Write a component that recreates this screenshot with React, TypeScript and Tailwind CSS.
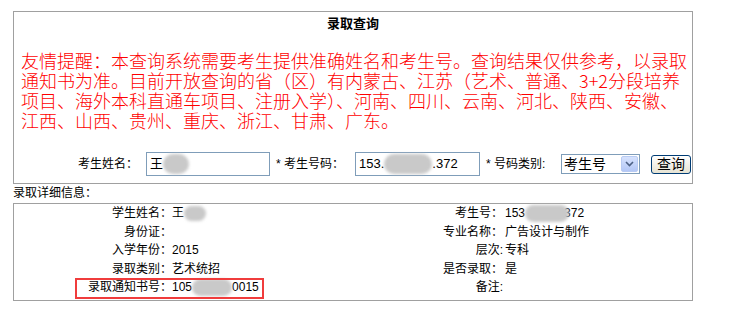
import React from "react";

function Blob({ w, h, className = "" }: { w: string; h: string; className?: string }) {
  return (
    <span
      className={`inline-block align-middle rounded-full bg-[#c9c9c9] blur-[1.5px] ${w} ${h} ${className}`}
    />
  );
}

const rows: [string, React.ReactNode, string, React.ReactNode][] = [
  [
    "学生姓名：",
    <>
      王<Blob w="w-[22px]" h="h-[15px]" />
    </>,
    "考生号：",
    <>
      153<Blob w="w-[44px]" h="h-[17px]" className="relative z-10 -mr-[5px]" />372
    </>,
  ],
  ["身份证：", "", "专业名称：", "广告设计与制作"],
  ["入学年份：", "2015", "层次:", "专科"],
  ["录取类别：", "艺术统招", "是否录取：", "是"],
  [
    "录取通知书号：",
    <>
      105<Blob w="w-[40px]" h="h-[17px]" />0015
    </>,
    "备注:",
    "",
  ],
];

export default function App() {
  return (
    <div className="relative w-[734px] h-[329px] overflow-hidden bg-white text-black font-['Liberation_Sans','Noto_Sans_CJK_SC',sans-serif]">
      {/* query box */}
      <div className="ml-[13px] mt-[11px] w-[680px] h-[173px] border border-[#a0a0a0] flex flex-col">
        <div className="pt-[4px] h-[26px] text-center text-[13px] leading-[16px] font-bold">录取查询</div>
        <div className="mt-[12px] pl-[7px] text-[18px] leading-[20px] font-light font-['Noto_Sans_CJK_SC',sans-serif] text-[#ff0000] whitespace-nowrap">
          <div>友情提醒：本查询系统需要考生提供准确姓名和考生号。查询结果仅供参考，以录取</div>
          <div>通知书为准。目前开放查询的省（区）有内蒙古、江苏（艺术、普通、3+2分段培养</div>
          <div>项目、海外本科直通车项目、注册入学）、河南、四川、云南、河北、陕西、安徽、</div>
          <div>江西、山西、贵州、重庆、浙江、甘肃、广东。</div>
        </div>
        <div className="mt-[22px] h-[24px] flex items-center pl-[64px] text-[12px] whitespace-nowrap">
          <span className="w-[68px]">考生姓名：</span>
          <div className="w-[124px] h-[24px] border border-[#7f9db9] bg-white flex items-center pl-[3px] text-[13px]">
            王<Blob w="w-[26px]" h="h-[20px]" />
          </div>
          <span className="ml-[6px] w-[79px]">* 考生号码：</span>
          <div className="w-[125px] h-[24px] border border-[#7f9db9] bg-white flex items-center pl-[3px] text-[13px]">
            153.<Blob w="w-[48px]" h="h-[20px]" />.372
          </div>
          <span className="ml-[6px] w-[75px]">* 号码类别:</span>
          <div className="w-[79px] h-[20px] border border-[#7f9db9] bg-white flex items-center justify-between pl-[2px] pr-px text-[14px] leading-[18px]">
            <span>考生号</span>
            <span className="w-[17px] h-[16px] rounded-[2px] border border-[#b8cbf3] bg-gradient-to-b from-[#d6e2fd] to-[#b3c7f6] flex items-center justify-center">
              <svg width="9" height="6" viewBox="0 0 9 6">
                <path d="M1 1 L4.5 4.5 L8 1" fill="none" stroke="#4d6185" strokeWidth="1.6" />
              </svg>
            </span>
          </div>
          <button className="ml-[11px] w-[40px] h-[19px] rounded-[3px] border border-[#003c74] bg-gradient-to-b from-white to-[#e6e3d3] text-[14px] leading-[16px] flex items-center justify-center">
            查询
          </button>
        </div>
      </div>

      <div className="ml-[13px] h-[19px] leading-[19px] text-[12px]">录取详细信息：</div>

      {/* detail box */}
      <div className="ml-[13px] w-[680px] h-[98px] border border-[#a0a0a0] grid grid-cols-[158px_175px_158px_1fr] auto-rows-[18.5px] text-[12px] leading-[18.5px] whitespace-nowrap">
        {rows.map(([l1, v1, l2, v2], i) => (
          <React.Fragment key={i}>
            <div className="text-right">{l1}</div>
            <div className="flex items-center">{v1}</div>
            <div className="text-right pr-[2px]">{l2}</div>
            <div className="flex items-center">{v2}</div>
          </React.Fragment>
        ))}
      </div>

      {/* red annotation frame */}
      <div className="absolute left-[75px] top-[278px] w-[189px] h-[21px] border-2 border-[#f03c3c]" />
    </div>
  );
}
